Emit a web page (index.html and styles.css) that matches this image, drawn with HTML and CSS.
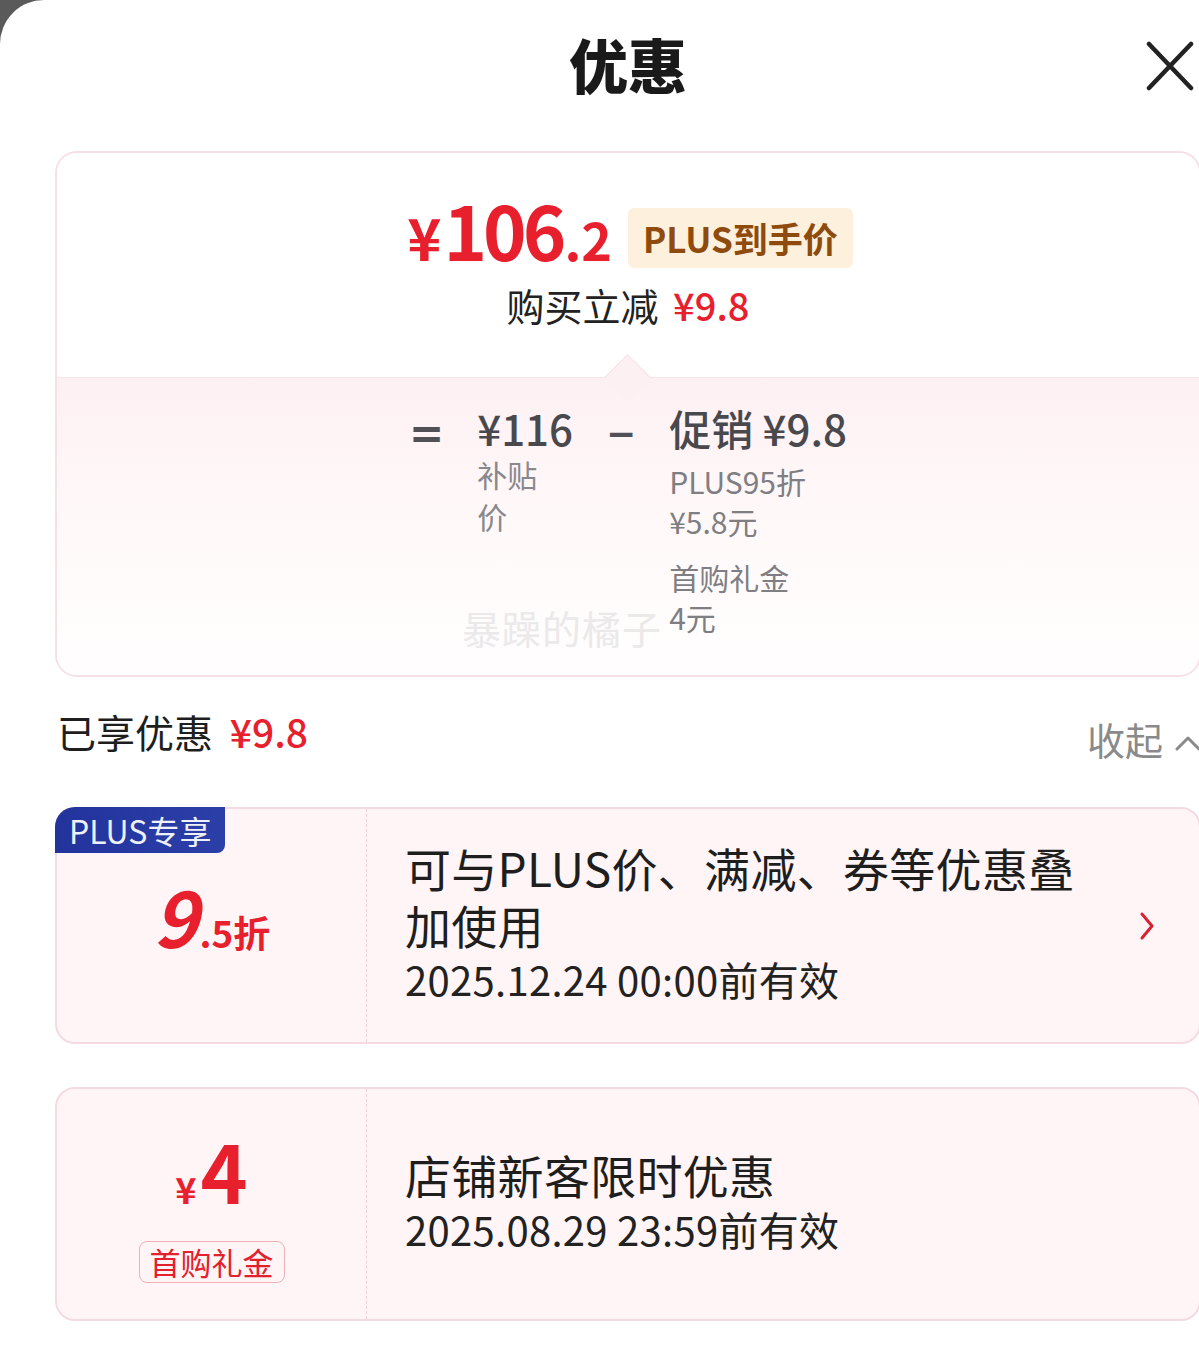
FILE: index.html
```html
<!DOCTYPE html>
<html lang="zh-CN">
<head>
<meta charset="utf-8">
<title>优惠</title>
<link rel="stylesheet" href="styles.css">
</head>
<body>
<div class="sheet">
  <header class="head">
    <span class="head-side"></span>
    <h1 class="title">优惠</h1>
    <span class="head-side head-right">
      <svg class="close" width="48" height="50" viewBox="0 0 48 50"><path d="M3 3 L45 47 M45 3 L3 47" stroke="#222" stroke-width="4.5" stroke-linecap="round" fill="none"/></svg>
    </span>
  </header>

  <section class="summary">
    <div class="sum-top">
      <div class="price-row">
        <span class="price"><span class="p-yen">¥</span><span class="p-int">106</span><span class="p-dec">.2</span></span>
        <span class="badge">PLUS到手价</span>
      </div>
      <div class="reduce">购买立减 <span class="reduce-amt">¥9.8</span></div>
    </div>
    <div class="sum-bottom">
      <div class="wm">暴躁的橘子</div>
      <div class="formula">
        <span class="op">=</span>
        <div class="f-col">
          <div class="f-price">¥116</div>
          <div class="f-label"><span>补贴</span><span>价</span></div>
        </div>
        <span class="op op-minus">−</span>
        <div class="f-col">
          <div class="f-price">促销 ¥9.8</div>
          <div class="f-sub"><span>PLUS95折</span><span>¥5.8元</span></div>
          <div class="f-sub"><span>首购礼金</span><span>4元</span></div>
        </div>
      </div>
    </div>
  </section>

  <div class="enjoyed">
    <div class="enjoyed-left">已享优惠 <span class="enjoyed-amt">¥9.8</span></div>
    <div class="enjoyed-right">收起
      <svg class="up" width="26" height="16" viewBox="0 0 26 16"><path d="M2 14 L13 3 L24 14" stroke="#8a8a8a" stroke-width="3" fill="none" stroke-linecap="round" stroke-linejoin="round"/></svg>
    </div>
  </div>

  <div class="coupon coupon-a">
    <div class="c-left">
      <span class="plus-tag">PLUS专享</span>
      <div class="disc"><span class="disc-big">9</span><span class="disc-small">.5折</span></div>
    </div>
    <div class="c-right">
      <div class="c-text">
        <div class="c-title">可与PLUS价、满减、券等优惠叠加使用</div>
        <div class="c-date">2025.12.24 00:00前有效</div>
      </div>
      <svg class="arrow" width="16" height="30" viewBox="0 0 16 30"><path d="M3 3 L13 15 L3 27" stroke="#d62232" stroke-width="3" fill="none" stroke-linecap="round" stroke-linejoin="round"/></svg>
    </div>
  </div>

  <div class="coupon coupon-b">
    <div class="c-left">
      <div class="amt"><span class="amt-yen">¥</span><span class="amt-num">4</span></div>
      <span class="gift-tag">首购礼金</span>
    </div>
    <div class="c-right">
      <div class="c-text">
        <div class="c-title">店铺新客限时优惠</div>
        <div class="c-date">2025.08.29 23:59前有效</div>
      </div>
    </div>
  </div>
</div>
</body>
</html>
```

FILE: styles.css
```css
html, body {
  margin: 0;
  padding: 0;
  overflow: hidden;
}
body {
  width: 1199px;
  height: 1356px;
  background: #5a5a5a;
  font-family: "Noto Sans CJK SC", "Noto Sans", sans-serif;
  color: #222;
}
.sheet {
  width: 1256px;
  height: 1356px;
  background: #fff;
  border-top-left-radius: 44px;
  box-sizing: border-box;
  padding-top: 26px;
}

/* header */
.head {
  display: grid;
  grid-template-columns: 1fr auto 1fr;
  align-items: center;
  height: 76px;
}
.title {
  margin: 0;
  font-size: 59px;
  line-height: 76px;
  font-weight: 900;
  color: #1a1a1a;
}
.head-right {
  justify-self: end;
  margin-right: 62px;
  display: flex;
  align-items: center;
  padding-top: 4px;
}

/* summary card */
.summary {
  margin: 49px 55px 0;
  border: 2px solid #f6dfe5;
  border-radius: 22px;
  overflow: hidden;
}
.sum-top {
  background: #fff;
  padding: 45px 0 47px;
  display: flex;
  flex-direction: column;
  align-items: center;
}
.price-row {
  display: flex;
  align-items: center;
  justify-content: center;
  gap: 16px;
  height: 80px;
  padding-left: 4px;
}
.price {
  color: #e8202e;
  font-weight: 700;
  line-height: 80px;
  white-space: nowrap;
  padding-top: 6px;
}
.p-yen {
  font-size: 58px;
  margin-right: 2px;
}
.p-int {
  font-size: 74px;
  letter-spacing: -4px;
}
.p-dec {
  font-size: 52px;
  margin-left: 2px;
}
.badge {
  background: #fdf0dd;
  color: #8e4b0d;
  font-size: 35px;
  font-weight: 700;
  line-height: 60px;
  height: 60px;
  padding: 0 15px;
  border-radius: 6px;
}
.reduce {
  font-size: 38px;
  line-height: 50px;
  margin-top: 2px;
  color: #222;
}
.reduce-amt {
  color: #e8202e;
  font-weight: 500;
  margin-left: 6px;
}

.sum-bottom {
  position: relative;
  background: linear-gradient(180deg, #fdf0f3 0%, #fff8f9 45%, #fffefe 100%);
  border-top: 1px solid #fae6ea;
  padding: 25px 0 38px;
}
.sum-bottom::before {
  content: "";
  position: absolute;
  left: 554px;
  top: -17px;
  width: 32px;
  height: 32px;
  background: #fdf0f3;
  border-left: 1px solid #f8dfe5;
  border-top: 1px solid #f8dfe5;
  transform: rotate(45deg);
}
.wm {
  position: absolute;
  left: 405px;
  top: 224px;
  font-size: 39px;
  line-height: 50px;
  color: #ebe9ea;
  letter-spacing: 1px;
}
.formula {
  position: relative;
  display: flex;
  justify-content: center;
  align-items: flex-start;
  gap: 33px;
}
.op {
  font-family: "DejaVu Sans", sans-serif;
  font-weight: 700;
  font-size: 42px;
  line-height: 62px;
  color: #505055;
}
.op-minus {
  font-size: 36px;
}
.f-col {
  display: flex;
  flex-direction: column;
}
.f-price {
  font-size: 42px;
  line-height: 50px;
  font-weight: 500;
  color: #48484d;
  white-space: nowrap;
}
.f-label {
  font-size: 30px;
  line-height: 42px;
  color: #88888d;
}
.f-label span,
.f-sub span {
  display: block;
}
.f-sub {
  font-size: 30px;
  line-height: 40px;
  color: #7e7e83;
  margin-top: 8px;
}
.f-sub + .f-sub {
  margin-top: 16px;
}

/* enjoyed row */
.enjoyed {
  display: flex;
  justify-content: space-between;
  align-items: flex-start;
  margin: 29px 55px 0 57px;
  height: 58px;
}
.enjoyed-left {
  font-size: 39px;
  line-height: 50px;
  color: #1e1e1e;
}
.enjoyed-amt {
  color: #e8202e;
  font-weight: 500;
  margin-left: 8px;
}
.enjoyed-right {
  margin-top: 8px;
  font-size: 38px;
  line-height: 50px;
  color: #8a8a8a;
  display: flex;
  align-items: center;
  gap: 12px;
}
.up {
  margin-top: 8px;
}

/* coupons */
.coupon {
  position: relative;
  margin: 43px 55px 0;
  border: 2px solid #f4dbe1;
  border-radius: 20px;
  background: #fff5f6;
  display: grid;
  grid-template-columns: 309px 1fr;
  box-sizing: border-box;
}
.coupon-a {
  height: 237px;
}
.coupon-b {
  height: 234px;
}
.c-left {
  display: flex;
  flex-direction: column;
  align-items: center;
  justify-content: center;
}
.c-right {
  border-left: 1.5px dashed #e9d2d7;
  display: flex;
  align-items: center;
  padding: 0 44px 0 38px;
  gap: 30px;
}
.c-text {
  flex: 1;
  min-width: 0;
  margin-top: -8px;
}
.c-title {
  font-size: 46px;
  line-height: 57px;
  color: #1e1e1e;
  letter-spacing: 0.3px;
}
.c-date {
  font-size: 40px;
  line-height: 52px;
  color: #222;
  letter-spacing: 0.3px;
}
.arrow {
  flex: none;
}

.plus-tag {
  position: absolute;
  left: -2px;
  top: -2px;
  background: linear-gradient(90deg, #22339c, #2c3ea8);
  color: #eef0fa;
  font-size: 32px;
  line-height: 46px;
  height: 46px;
  padding: 0 14px;
  border-top-left-radius: 20px;
  border-bottom-right-radius: 8px;
}
.disc {
  color: #e8202e;
  font-weight: 700;
  line-height: 80px;
  white-space: nowrap;
  margin-top: 4px;
}
.disc-big {
  font-size: 76px;
  font-style: italic;
}
.disc-small {
  font-size: 37px;
  margin-left: 2px;
}

.amt {
  color: #e8202e;
  font-weight: 700;
  line-height: 88px;
  white-space: nowrap;
}
.amt-yen {
  font-size: 36px;
  margin-right: 4px;
}
.amt-num {
  font-size: 80px;
}
.gift-tag {
  margin-top: 0;
  border: 1.5px solid #efb1b8;
  border-radius: 8px;
  color: #e3202d;
  font-size: 31px;
  line-height: 40px;
  padding: 0 10px;
}
```
